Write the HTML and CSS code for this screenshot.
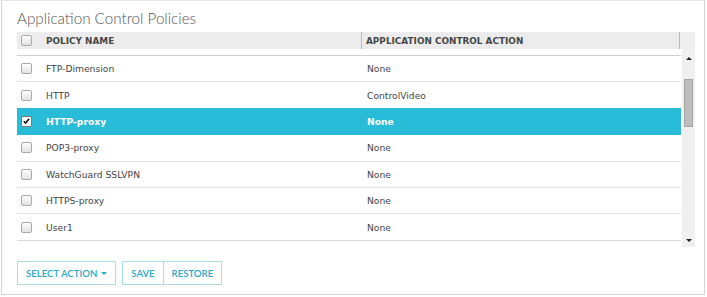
FILE: index.html
```html
<!DOCTYPE html>
<html lang="en">
<head>
  <meta charset="UTF-8" />
  <title>Application Control Policies</title>
  <link rel="stylesheet" href="styles.css">
</head>
<body>
  <div class="panel">
    <h1 class="panel-title">Application Control Policies</h1>
    <div class="grid">
      <div class="grid-head">
        <div class="cell-check"><span class="check"></span></div>
        <div class="head-cell name-col">POLICY NAME</div>
        <div class="head-cell action-col">APPLICATION CONTROL ACTION</div>
        <div class="head-corner"></div>
      </div>
      <div class="grid-body">
        <div class="rows">
          <div class="row">
            <div class="cell-check"><span class="check"></span></div>
            <div class="cell name-col">FTP-Dimension</div>
            <div class="cell action-col">None</div>
          </div>
          <div class="row">
            <div class="cell-check"><span class="check"></span></div>
            <div class="cell name-col">HTTP</div>
            <div class="cell action-col">ControlVideo</div>
          </div>
          <div class="row selected">
            <div class="cell-check"><span class="check checked">
              <svg viewBox="0 0 10 10" width="10" height="10"><path d="M2 5.2L4 7.3L8 2.6" stroke="#111" stroke-width="1.7" fill="none"/></svg>
            </span></div>
            <div class="cell name-col">HTTP-proxy</div>
            <div class="cell action-col">None</div>
          </div>
          <div class="row">
            <div class="cell-check"><span class="check"></span></div>
            <div class="cell name-col">POP3-proxy</div>
            <div class="cell action-col">None</div>
          </div>
          <div class="row">
            <div class="cell-check"><span class="check"></span></div>
            <div class="cell name-col">WatchGuard SSLVPN</div>
            <div class="cell action-col">None</div>
          </div>
          <div class="row">
            <div class="cell-check"><span class="check"></span></div>
            <div class="cell name-col">HTTPS-proxy</div>
            <div class="cell action-col">None</div>
          </div>
          <div class="row">
            <div class="cell-check"><span class="check"></span></div>
            <div class="cell name-col">User1</div>
            <div class="cell action-col">None</div>
          </div>
        </div>
        <div class="scrollbar">
          <span class="arrow-up"></span>
          <span class="thumb"></span>
          <span class="arrow-down"></span>
        </div>
      </div>
    </div>
    <div class="actions">
      <button class="btn">SELECT ACTION <span class="caret"></span></button>
      <div class="btn-group">
        <button class="btn">SAVE</button>
        <button class="btn">RESTORE</button>
      </div>
    </div>
  </div>
</body>
</html>
```

FILE: styles.css
```css
html, body {
  box-sizing: border-box;
}
body {
  margin: 0;
  background: #fff;
  font-family: 'DejaVu Sans', Verdana, sans-serif;
  color: #444;
}
.panel {
  margin: 0 2px 0 1px;
  height: 295px;
  border: 1px solid #d4d4d4;
  border-top-color: #e4e4e4;
  box-sizing: border-box;
  padding: 0 0 0 15px;
}
.panel-title {
  margin: 0;
  padding-top: 8px;
  height: 23px;
  font-family: 'Lato', sans-serif;
  font-weight: 300;
  font-size: 15.2px;
  line-height: 19px;
  color: #555;
}
.grid {
  width: 678px;
}
.grid-head {
  display: flex;
  height: 17px;
  background: #ececec;
  align-items: stretch;
}
.cell-check {
  width: 29px;
  flex: none;
  display: flex;
  align-items: center;
  padding-left: 4px;
  box-sizing: border-box;
}
.check {
  width: 9px;
  height: 9px;
  border: 1px solid #a9a9a9;
  border-radius: 2px;
  background: linear-gradient(180deg, #fdfdfd 0%, #e3e3e3 100%);
  display: flex;
  align-items: center;
  justify-content: center;
}
.check svg {
  display: block;
}
.check.checked {
  background: #fff;
  border-color: #777;
}
.name-col {
  width: 316px;
  flex: none;
}
.action-col {
  width: 318px;
  flex: none;
}
.head-cell {
  font-size: 8.9px;
  font-weight: bold;
  color: #474747;
  display: flex;
  align-items: center;
  border-right: 1px solid #b8b8b8;
  box-sizing: border-box;
}
.head-cell.action-col {
  padding-left: 4px;
}
.head-corner {
  flex: 1;
  background: #efefef;
}
.grid-body {
  display: flex;
  height: 198px;
}
.rows {
  width: 664px;
  padding-top: 6px;
  overflow: hidden;
}
.row {
  display: flex;
  height: 26.4px;
  border-top: 1px solid #d0d0d0;
  box-sizing: border-box;
  align-items: center;
}
.row + .row {
  border-top-color: #e2e2e2;
}
.row:last-child {
  border-bottom: 1px solid #d8d8d8;
  height: 27.4px;
}
.cell {
  font-size: 9.2px;
  color: #444;
}
.cell.action-col {
  padding-left: 5px;
}
.row.selected {
  background: #29bcd9;
  border-top-color: #29bcd9;
}
.row.selected + .row {
  border-top-color: #29bcd9;
}
.row.selected .cell {
  color: #fff;
  font-weight: bold;
}
.scrollbar {
  width: 13px;
  margin-left: 1px;
  background: #f0f0f0;
  display: flex;
  flex-direction: column;
  align-items: center;
}
.arrow-up {
  margin-top: 8px;
  width: 0;
  height: 0;
  border-left: 3px solid transparent;
  border-right: 3px solid transparent;
  border-bottom: 3px solid #222;
}
.thumb {
  margin-top: 19px;
  width: 9px;
  height: 48px;
  background: #bdbdbd;
  border: 1px solid #a5a5a5;
  box-sizing: border-box;
}
.arrow-down {
  margin-top: auto;
  margin-bottom: 5px;
  width: 0;
  height: 0;
  border-left: 3px solid transparent;
  border-right: 3px solid transparent;
  border-top: 3px solid #222;
}
.actions {
  display: flex;
  gap: 6px;
  margin-top: 14px;
}
.btn-group {
  display: flex;
}
.btn-group .btn + .btn {
  border-left: none;
}
.btn {
  height: 24px;
  border: 1px solid #a9dce8;
  background: #fff;
  color: #2aa9c7;
  font-family: 'Lato', sans-serif;
  font-weight: 600;
  font-size: 9.6px;
  padding: 0 8px;
  display: flex;
  align-items: center;
  gap: 4px;
  cursor: pointer;
}
.caret {
  width: 0;
  height: 0;
  border-left: 3px solid transparent;
  border-right: 3px solid transparent;
  border-top: 3px solid #2aa9c7;
}
```
